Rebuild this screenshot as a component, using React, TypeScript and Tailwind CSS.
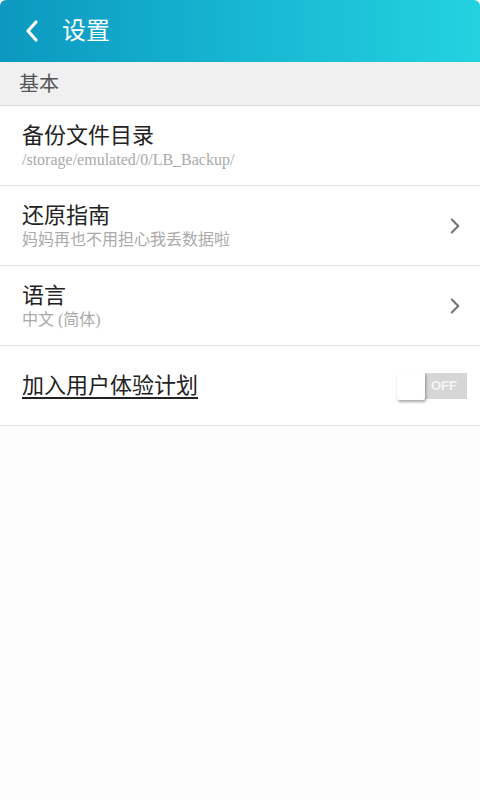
import { ChevronRight } from "lucide-react";

const rows = [
  { title: "备份文件目录", sub: "/storage/emulated/0/LB_Backup/", arrow: false },
  { title: "还原指南", sub: "妈妈再也不用担心我丢数据啦", arrow: true },
  { title: "语言", sub: "中文 (简体)", arrow: true },
];

export default function App() {
  return (
    <div
      className="min-h-[800px] w-[480px] bg-[#fdfdfd]"
      style={{ fontFamily: '"Liberation Sans", "Noto Sans CJK SC", sans-serif' }}
    >
      <div className="flex h-[62px] items-center rounded-t-[6px] bg-gradient-to-r from-[#0c98c0] via-[#17b6d2] to-[#24d2df]">
        <svg viewBox="0 0 16 24" className="ml-[24px] h-[24px] w-[16px]" fill="none" stroke="white" strokeWidth="3.2" strokeLinecap="round" strokeLinejoin="round">
          <path d="M12 3 L4 12 L12 21" />
        </svg>
        <span className="ml-[22px] text-[24px] text-white">设置</span>
      </div>

      <div className="flex h-[44px] items-center border-b border-[#d9d9d9] bg-[#f0f0f0] pl-[19px] text-[20px] text-[#555]">
        基本
      </div>

      {rows.map(r => (
        <div key={r.title} className="flex h-[80px] items-center border-b border-[#e4e4e4] bg-white pl-[22px] pr-[12px]">
          <div className="flex flex-1 flex-col">
            <span className="text-[22px] leading-[28px] text-[#222]">{r.title}</span>
            <span
              className="text-[16px] leading-[20px] text-[#aaa]"
              style={{ fontFamily: '"Liberation Serif", "Noto Sans CJK SC", serif' }}
            >
              {r.sub}
            </span>
          </div>
          {r.arrow && <ChevronRight className="h-[26px] w-[26px] text-[#707070]" strokeWidth={1.8} />}
        </div>
      ))}

      <div className="flex h-[80px] items-center border-b border-[#e4e4e4] bg-white pl-[22px] pr-[13px]">
        <span className="flex-1 text-[22px] text-[#222] underline underline-offset-[4px]">加入用户体验计划</span>
        <div className="relative flex h-[26px] w-[70px] items-center justify-end bg-[#d6d6d6] pr-[10px]">
          <span className="text-[13px] font-bold text-[#f4f4f4]">OFF</span>
          <div className="absolute left-0 top-[-1px] h-[28px] w-[28px] rounded-[2px] bg-white shadow-[1px_2px_3px_rgba(0,0,0,0.35)]" />
        </div>
      </div>
    </div>
  );
}
